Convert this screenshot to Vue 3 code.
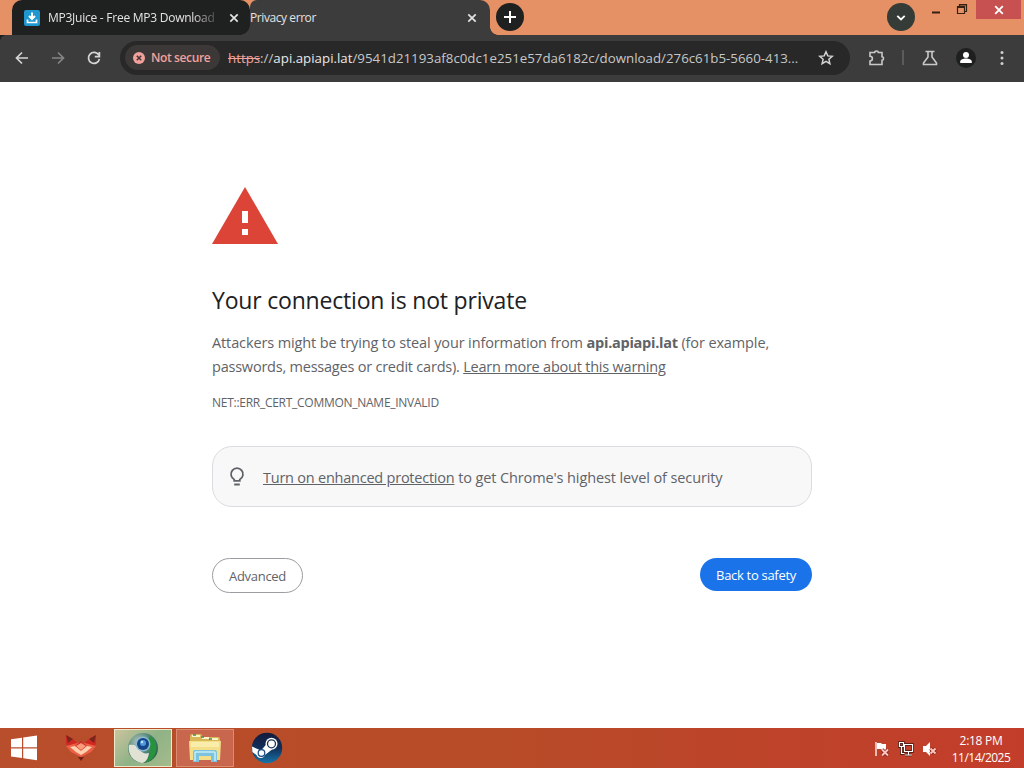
<script setup>
import { ref } from 'vue'

const tabTitle = ref('MP3Juice - Free MP3 Download')
const host = ref('api.apiapi.lat')
const path = ref('/9541d21193af8c0dc1e251e57da6182c/download/276c61b5-5660-413...')
const clock = ref({ time: '2:18 PM', date: '11/14/2025' })
</script>

<template>
  <div class="screen">
    <!-- tab strip -->
    <header class="tab-strip">
      <div class="tab tab-back">
        <svg class="favicon" viewBox="0 0 16 16">
          <rect width="16" height="16" rx="2" fill="#2097cf" />
          <path d="M8 2.5v6M5 6l3 3 3-3" fill="none" stroke="#fff" stroke-width="2" />
          <path d="M3.5 9.5v3h9v-3" fill="none" stroke="#fff" stroke-width="1.7" />
        </svg>
        <span class="tab-title fade">{{ tabTitle }}</span>
        <svg class="tab-close" viewBox="0 0 10 10"><path d="M1.3 1.3l7.4 7.4M8.7 1.3L1.3 8.7" /></svg>
      </div>
      <div class="tab tab-front">
        <span class="tab-title">Privacy error</span>
        <svg class="tab-close" viewBox="0 0 10 10"><path d="M1.3 1.3l7.4 7.4M8.7 1.3L1.3 8.7" /></svg>
      </div>
      <i class="tab-flare"></i>
      <button class="new-tab">
        <svg viewBox="0 0 28 28"><path d="M14 8v12M8 14h12" stroke="#fff" stroke-width="2" /></svg>
      </button>
      <div class="window-controls">
        <button class="tab-search">
          <svg viewBox="0 0 28 28"><path d="M10.3 12.8l3.7 3.6 3.7-3.6" fill="none" stroke="#fff" stroke-width="1.8" /></svg>
        </button>
        <svg class="minimize" viewBox="0 0 10 3"><path d="M1 1.5h8" stroke="#362113" stroke-width="2" /></svg>
        <svg class="restore" viewBox="0 0 12 12">
          <path d="M3.5 3.5v-2h7v7h-2M1.5 3.5h7v7h-7zM1.5 4.5h7M3.5 2h7" fill="none" stroke="#362113" stroke-width="1.2" />
        </svg>
        <button class="window-close">
          <svg viewBox="0 0 10 10"><path d="M1.2 1.2l7.6 7.6M8.8 1.2L1.2 8.8" stroke="#fff" stroke-width="1.9" /></svg>
        </button>
      </div>
    </header>

    <!-- toolbar -->
    <nav class="toolbar">
      <svg class="nav-icon" viewBox="0 0 16 16"><path d="M14 8H2.8M8 2.5L2.5 8 8 13.5" /></svg>
      <svg class="nav-icon dim" viewBox="0 0 16 16"><path d="M2 8h11.2M8 2.5L13.5 8 8 13.5" /></svg>
      <svg class="nav-icon" viewBox="0 0 16 16"><path d="M12.8 5.2A5.5 5.5 0 1 0 13.4 9M13.4 2v4.6H8.8" /></svg>
      <div class="omnibox">
        <div class="chip">
          <svg viewBox="0 0 12 12">
            <circle cx="6" cy="6" r="6" fill="#f2a29d" />
            <path d="M3.8 3.8l4.4 4.4M8.2 3.8L3.8 8.2" stroke="#4a3534" stroke-width="1.6" />
          </svg>
          <span>Not secure</span>
        </div>
        <div class="url"><s>https</s><span>://</span><b>{{ host }}</b><span>{{ path }}</span></div>
        <svg class="star" viewBox="0 0 16 16">
          <path d="M8 1.8l1.8 4.1 4.5.4-3.4 3 1 4.4L8 11.4l-3.9 2.3 1-4.4-3.4-3 4.5-.4z" />
        </svg>
      </div>
      <svg class="tool puzzle" viewBox="0 0 18 18">
        <path d="M2 3.500h4.700a1.800 1.500 0 0 1 3.600 0H14v4.200a1.500 1.800 0 0 1 0 3.600V15.500H2V12a2.300 2.300 0 0 0 0-4.800z" />
      </svg>
      <i class="divider"></i>
      <svg class="tool flask" viewBox="0 0 18 18"><path d="M4.500 2.500h9M7 3v5L2.500 14v1.500h13V14L11 8V3" /></svg>
      <svg class="avatar" viewBox="0 0 20 20">
        <circle cx="10" cy="10" r="10" fill="#1e1f1f" />
        <circle cx="10" cy="7" r="3" fill="#fff" />
        <path d="M4.200 15v-1.500c0-2 3.200-3 5.800-3s5.800 1 5.800 3V15z" fill="#fff" />
      </svg>
      <svg class="menu-dots" viewBox="0 0 4 16">
        <circle cx="2" cy="2.500" r="1.500" /><circle cx="2" cy="8" r="1.500" /><circle cx="2" cy="13.500" r="1.500" />
      </svg>
    </nav>

    <!-- interstitial -->
    <main class="page">
      <div class="content">
        <svg class="warning" viewBox="0 0 66 57">
          <path d="M33 0l33 57H0z" fill="#db4437" />
          <path d="M30 24h6v12h-6zM30 42h6v6h-6z" fill="#fff" />
        </svg>
        <h1>Your connection is not private</h1>
        <p class="message">
          <span class="line1">Attackers might be trying to steal your information from <strong>{{ host }}</strong> (for example,</span><br>
          <span class="line2">passwords, messages or credit cards). <a>Learn more about this warning</a></span>
        </p>
        <div class="error-code">NET::ERR_CERT_COMMON_NAME_INVALID</div>
        <div class="promo">
          <svg viewBox="0 0 16 20">
            <path d="M5.200 13.800v-1.300A6 6 0 1 1 10.800 12.500v1.300zM5.200 17.500h5.600" />
          </svg>
          <span class="promo-text"><a>Turn on enhanced protection</a> to get Chrome's highest level of security</span>
        </div>
        <div class="actions">
          <button class="btn-secondary">Advanced</button>
          <button class="btn-primary">Back to safety</button>
        </div>
      </div>
    </main>

    <!-- taskbar -->
    <footer class="taskbar">
      <div class="task start">
        <svg width="28" height="26" viewBox="0 0 28 26">
          <path d="M1 4.200l11-1.500v9.600H1zM13.200 2.500L27 .6v11.700H13.200zM1 13.500h11V23L1 21.500zM13.200 13.500H27v11.700l-13.800-2z" fill="#fff" />
        </svg>
      </div>
      <div class="task">
        <svg width="34" height="28" viewBox="0 0 34 28">
          <path d="M2 1l8 5 7 6 7-6 8-5v9l-4 5-11 7-11-7-4-5z" fill="#cf2921" />
          <path d="M2 1l7 4-5 4zM32 1l-7 4 5 4z" fill="#7d241e" />
          <path d="M17 8l15 4-5 6-10 5-10-5-5-6z" fill="#ec6048" />
          <path d="M17 7l6 5-6 4-6-4z" fill="#c92b24" />
          <path d="M6 13l5-1 6 5 6-5 5 1-6 5-5 3-5-3z" fill="#ffd0ae" />
          <path d="M12 12l5-3 5 3-5 4z" fill="#fa9c7b" />
          <path d="M14 23h6l-3 4z" fill="#742018" />
        </svg>
      </div>
      <div class="task active">
        <svg width="32" height="32" viewBox="0 0 32 32">
          <defs>
            <radialGradient id="ball" cx=".35" cy=".3" r=".8">
              <stop offset="0" stop-color="#b6c7bd" /><stop offset=".5" stop-color="#52877b" /><stop offset="1" stop-color="#235845" />
            </radialGradient>
          </defs>
          <circle cx="16" cy="16" r="15" fill="url(#ball)" />
          <path d="M23 4a15 15 0 0 1-5 26.800C23 25 26 17 20 9z" fill="#28933d" />
          <path d="M2 13c5-1 9 1 11 5 2 3 5 4 9 3-1 6-3 9.500-7 10A15 15 0 0 1 2 13z" fill="#e2e2d4" />
          <circle cx="16" cy="12" r="7.500" fill="#8ab8cf" />
          <circle cx="16" cy="12" r="6" fill="#164688" />
          <circle cx="16" cy="11" r="3" fill="#4f9bdc" />
          <circle cx="15" cy="10" r="1.200" fill="#c4e4f8" />
        </svg>
      </div>
      <div class="task open">
        <svg width="34" height="30" viewBox="0 0 34 30">
          <path d="M2 3q0-2 2-2h9l2 3h15q2 0 2 2v20H2z" fill="#d9b757" />
          <path d="M4 3h8M14 5h7M22 6h8" stroke="#f8f4cb" stroke-width="2" />
          <path d="M5 2h3M13 4h3M21 6h3" stroke="#4b8650" stroke-width="1.500" />
          <path d="M1 8h32l-1 19H2z" fill="#f3df89" />
          <path d="M3 9h28v5H3z" fill="#faedab" />
          <path d="M5 29V19q0-2 2-2h20q2 0 2 2v10h-6v-6H11v6z" fill="#7bc3de" />
          <path d="M7 19h20M7 19v9M27 19v9" stroke="#c7eef5" stroke-width="1.500" />
        </svg>
      </div>
      <div class="task">
        <svg width="32" height="32" viewBox="0 0 32 32">
          <defs>
            <linearGradient id="steam" x1="0" y1="0" x2="0" y2="1">
              <stop offset="0" stop-color="#121b3b" /><stop offset=".5" stop-color="#112f5a" /><stop offset="1" stop-color="#1774a7" />
            </linearGradient>
          </defs>
          <circle cx="16" cy="16" r="15.200" fill="url(#steam)" />
          <path d="M1 14.500l9 4 6-7 5 6-7 5.500a4.500 4.500 0 0 1-8.500 0L1.400 20z" fill="#fff" />
          <circle cx="20.500" cy="11.800" r="6" fill="#fff" />
          <circle cx="20.500" cy="11.800" r="4" fill="#fff" stroke="#173356" stroke-width="1.300" />
          <circle cx="10.500" cy="21" r="3.300" fill="#fff" stroke="#174979" stroke-width="1.200" />
        </svg>
      </div>
      <div class="tray">
        <svg width="16" height="16" viewBox="0 0 16 16">
          <path d="M2 1v14" stroke="#fff" stroke-width="1.300" />
          <path d="M3 2h4l1 1h4v6H8L7 8H3z" fill="#fff" />
          <path d="M8 8.500l6 6M14 8.500l-6 6" stroke="#7c211b" stroke-width="3.600" />
          <path d="M8 8.500l6 6M14 8.500l-6 6" stroke="#ffc4bb" stroke-width="2" />
        </svg>
        <svg width="16" height="16" viewBox="0 0 16 16">
          <path d="M6.500 3.500h8v7h-8zM10.500 11v3M7 14h7M1.500 1.500h4v4h-4zM3.500 5.500v7h3" fill="none" stroke="#3d160d" stroke-width="2.600" />
          <path d="M6.500 3.500h8v7h-8zM10.500 11v3M7 14h7M1.500 1.500h4v4h-4zM3.500 5.500v7h3" fill="none" stroke="#fff" stroke-width="1.200" />
        </svg>
        <svg width="16" height="16" viewBox="0 0 16 16">
          <path d="M1 5h3l4-4v14l-4-4H1z" fill="#fff" />
          <path d="M8.500 7.500l5 5M13.500 7.500l-5 5" stroke="#7c211b" stroke-width="3.400" />
          <path d="M8.500 7.500l5 5M13.500 7.500l-5 5" stroke="#ffc4bb" stroke-width="2" />
        </svg>
      </div>
      <div class="clock">
        <span class="time">{{ clock.time }}</span>
        <span class="date">{{ clock.date }}</span>
      </div>
    </footer>
  </div>
</template>

<style>
body {
  margin: 0;
  overflow: hidden;
}
</style>

<style scoped>
.screen {
  display: flex;
  flex-direction: column;
  width: 1024px;
  height: 768px;
  overflow: hidden;
  background: #fff;
  font-family: 'Open Sans', 'Noto Sans', sans-serif;
  white-space: nowrap;
}

.screen * {
  box-sizing: border-box;
}

svg {
  display: block;
  flex: none;
}

button {
  border: 0;
  padding: 0;
  font-family: inherit;
}

/* 标签栏 */
.tab-strip {
  display: flex;
  height: 35px;
  flex: none;
  padding-left: 12px;
  background: #e69165;
}

.tab {
  display: flex;
  align-items: center;
  height: 35px;
  color: #e3e3e3;
  font-size: 12px;
}

.tab-back {
  width: 238px;
  padding: 0 11px 0 12px;
  border-radius: 10px 10px 0 0;
  background: radial-gradient(circle at 0 0, #1f2020 9.5px, #3c3c3c 10px) right bottom / 10px 10px no-repeat, #1f2020;
}

.tab-front {
  width: 240px;
  border-radius: 7px 10px 0 0;
  background: #3c3c3c;
}

.tab-flare {
  align-self: flex-end;
  width: 8px;
  height: 8px;
  margin-right: -8px;
  background: radial-gradient(circle at 100% 0, transparent 7.5px, #3c3c3c 8px);
}

.favicon {
  width: 16px;
  height: 16px;
  margin-right: 8px;
}

.tab-title {
  flex: 1;
  overflow: hidden;
  line-height: 20px;
  letter-spacing: -0.42px;
}

.fade {
  margin-right: 13px;
  letter-spacing: -0.25px;
  mask-image: linear-gradient(90deg, #000 86%, rgba(0, 0, 0, 0.2));
}

.tab-close {
  width: 10px;
  height: 10px;
  stroke: #e3e3e3;
  stroke-width: 1.7;
}

.tab-front .tab-close {
  margin-right: 13px;
}

.new-tab,
.tab-search {
  width: 28px;
  height: 28px;
  border-radius: 50%;
  background: #1f2020;
}

.new-tab {
  margin: 3px 0 0 6px;
}

.window-controls {
  display: flex;
  align-items: flex-start;
  margin-left: auto;
  padding-right: 3px;
}

.tab-search {
  margin: 3px 16px 0 0;
  background: #353c37;
}

.minimize {
  width: 10px;
  height: 3px;
  margin: 11px 15px 0 0;
}

.restore {
  width: 12px;
  height: 12px;
  margin: 3px 8px 0 0;
}

.window-close {
  display: flex;
  align-items: center;
  justify-content: center;
  width: 45px;
  height: 19px;
  background: #c75050;
}

.window-close svg {
  width: 10px;
  height: 10px;
}

/* 工具栏 */
.toolbar {
  display: flex;
  align-items: center;
  height: 47px;
  flex: none;
  padding: 0 20px 2px 14px;
  background:
    radial-gradient(circle at 100% 100%, transparent 5.5px, #1f2020 6px) left top / 6px 6px no-repeat,
    #3c3c3c;
}

.nav-icon {
  width: 16px;
  height: 16px;
  margin-right: 20px;
  fill: none;
  stroke: #d5d5d5;
  stroke-width: 1.7;
}

.dim {
  stroke: #858585;
}

.omnibox {
  display: flex;
  align-items: center;
  width: 730px;
  height: 34px;
  margin-left: -2px;
  padding: 0 16px 0 5px;
  border-radius: 17px;
  background: #282828;
}

.chip {
  display: flex;
  align-items: center;
  gap: 6px;
  width: 95px;
  height: 25px;
  padding-left: 8px;
  border-radius: 13px;
  background: #3c3838;
  color: #f2a29d;
  font-size: 12px;
  font-weight: 600;
  letter-spacing: -0.37px;
}

.chip svg {
  width: 12px;
  height: 12px;
}

.url {
  flex: 1;
  margin-left: 8px;
  color: #c7c7c7;
  font-size: 13.3px;
}

.url s {
  color: #f2a29d;
}

.url b {
  color: #e8e8e8;
  font-weight: 400;
}

.star {
  width: 16px;
  height: 16px;
  fill: none;
  stroke: #d5d5d5;
  stroke-width: 1.5;
}

.tool {
  width: 18px;
  height: 18px;
  fill: none;
  stroke: #c9c9c9;
  stroke-width: 1.6;
}

.puzzle {
  margin-left: 18px;
}

.divider {
  width: 2px;
  height: 15px;
  margin: 0 17px 0 16px;
  background: #5b5b5b;
}

.avatar {
  width: 20px;
  height: 20px;
  margin: 0 24px 0 17px;
}

.menu-dots {
  width: 4px;
  height: 16px;
  fill: #d0d0d0;
}

/* 警告页面 */
.page {
  flex: 1;
  color: #5f6368;
}

.content {
  width: 600px;
  margin: 0 auto;
  padding-top: 105px;
}

.warning {
  width: 66px;
  height: 57px;
}

h1 {
  margin: 39px 0 0;
  color: #202124;
  font-size: 23px;
  font-weight: 400;
  line-height: 34px;
  letter-spacing: -0.19px;
}

.message {
  margin: 14px 0 0;
  font-size: 14.5px;
  line-height: 24px;
}

.line1 {
  letter-spacing: -0.12px;
}

.line1 strong {
  letter-spacing: -0.26px;
}

.line2 {
  letter-spacing: -0.22px;
}

a {
  text-decoration: underline;
}

.error-code {
  margin-top: 14px;
  font-size: 12px;
  line-height: 20px;
  letter-spacing: -0.27px;
}

.promo {
  display: flex;
  align-items: center;
  height: 61px;
  margin-top: 33px;
  padding-left: 16px;
  border: 1px solid #dadce0;
  border-radius: 20px;
  background: #f8f8f9;
  font-size: 14.5px;
}

.promo svg {
  width: 16px;
  height: 20px;
  margin-right: 18px;
  fill: none;
  stroke: #5f6368;
  stroke-width: 1.8;
}

.promo-text {
  padding-top: 2px;
  letter-spacing: -0.11px;
}

.promo-text a {
  letter-spacing: -0.23px;
}

.actions {
  display: flex;
  justify-content: space-between;
  margin-top: 51px;
}

.btn-secondary,
.btn-primary {
  border-radius: 18px;
  font-size: 13px;
  letter-spacing: -0.3px;
}

.btn-secondary {
  width: 91px;
  height: 35px;
  border: 1px solid #9b9da0;
  background: #fff;
  color: #5f6368;
}

.btn-primary {
  width: 112px;
  height: 33px;
  background: #1a73e8;
  color: #fff;
}

/* 任务栏 */
.taskbar {
  display: flex;
  align-items: center;
  gap: 4px;
  height: 40px;
  flex: none;
  padding-right: 13px;
  background: linear-gradient(90deg, #b84e2b 0, #b84b28 50%, #bd4329 75%, #c33d2b 100%);
}

.task {
  display: flex;
  align-items: center;
  justify-content: center;
  width: 58px;
  height: 38px;
}

.start {
  width: 48px;
}

.active {
  border: 1px solid #eee9c9;
  background: linear-gradient(135deg, #cbc49e, #8fb286 50%, #a5bb8c);
}

.open {
  border: 1px solid #dc8c71;
  background: #c8664e;
}

.tray {
  display: flex;
  gap: 8px;
  margin-left: auto;
  padding-top: 2px;
}

.clock {
  display: flex;
  flex-direction: column;
  align-items: center;
  width: 60px;
  margin-left: 9px;
  padding-top: 1px;
  color: #fff;
  font-size: 12px;
  line-height: 17px;
  letter-spacing: -0.3px;
}

.date {
  letter-spacing: -0.52px;
}
</style>
